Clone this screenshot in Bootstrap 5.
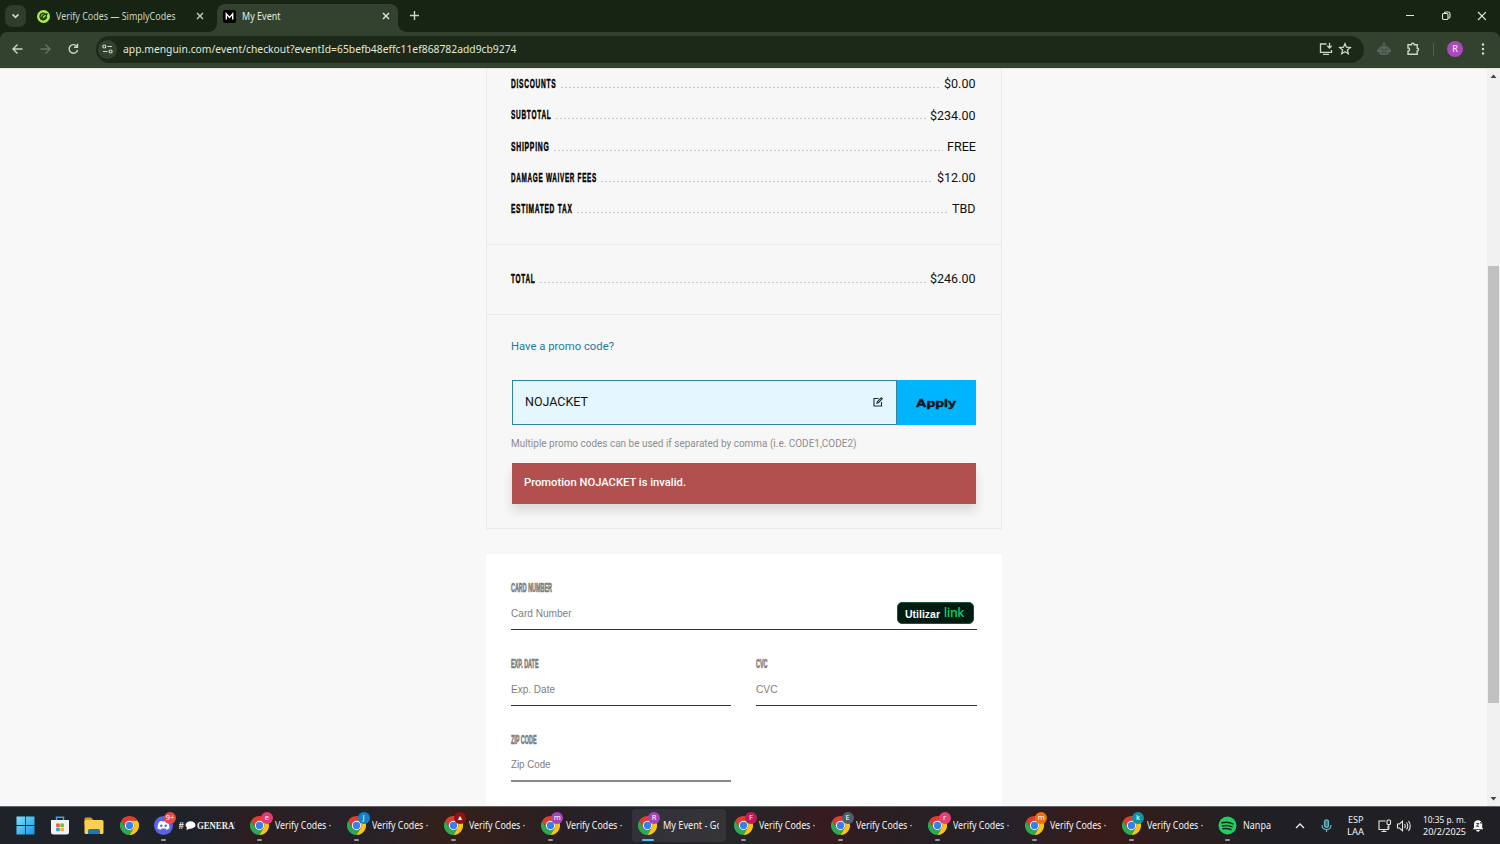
<!DOCTYPE html>
<html lang="en">
<head>
<meta charset="utf-8">
<title>My Event</title>
<link href="https://cdn.jsdelivr.net/npm/bootstrap@5.3.0/dist/css/bootstrap.min.css" rel="stylesheet">
<style>
body{width:1500px;height:844px;overflow:hidden;font-family:"Noto Sans","Open Sans",sans-serif;background:#f7f7f7;color:#111}
svg{display:block;flex:none}
.fit{display:inline-block;white-space:nowrap;transform-origin:0 50%;flex:none}
.ic{fill:none;stroke:#c9d8c4;stroke-width:1.4}
/* browser frame */
.tabstrip{height:32px;background:#172313;color:#c9d6c4;font-size:10.3px}
.tab-search{width:21px;height:22px;border-radius:7px;background:#2f3d2b;margin:5px 0 0 5px}
.tab-idle{width:191px;padding-left:11px;height:32px}
.tab-live{position:relative;width:181px;height:28px;margin-top:4px;padding:0 8px 4px 6px;background:#33412f;border-radius:8px 8px 0 0;color:#e3ebdf}
.tab-live::before,.tab-live::after{content:"";position:absolute;bottom:0;width:8px;height:8px}
.tab-live::before{left:-8px;background:radial-gradient(circle at 0 0,transparent 7.5px,#33412f 8px)}
.tab-live::after{right:-8px;background:radial-gradient(circle at 100% 0,transparent 7.5px,#33412f 8px)}
.tabstrip .fit{padding-top:1px}
.toolbar-wrap{background:#172313}
.toolbar{height:36px;background:#33412f;border-radius:7px 7px 0 0;padding:0 0 2px 12px}
.omni{width:1268px;height:27px;border-radius:14px;background:#1c2919;margin-left:14px;padding-left:2px;color:#e0e8dc;font-size:11.3px}
.omni-chip{width:19px;height:19px;border-radius:50%;background:#33412f;margin-right:6px}
.avatar{width:16px;height:16px;border-radius:50%;background:#ac47bd;color:#fff;font-size:9px}
/* page */
.viewport{height:738px;overflow:hidden;background:#f8f8f8;border-top:1px solid #e6e8e0}
.page-col{width:516px;margin-left:486px;font-family:Roboto,sans-serif}
.summary{width:515.5px;height:460px;border:1px solid #ebebeb;border-top:0;background:#f7f7f7}
.sect{padding:0 25px 0 24px;border-bottom:1px solid #ebebeb}
.line-row{height:31.25px;font-size:13.5px;position:relative;top:-.4px}
.amount{padding-bottom:1.6px}
.cond{font-family:"Liberation Sans",sans-serif;font-weight:700;color:#000;font-size:13.6px;letter-spacing:1.5px;-webkit-text-stroke:.5px}
.dots{flex:1;margin:7px 4px 0 4px;background:repeating-linear-gradient(90deg,#c9c9c9 0 2px,transparent 2px 4px);height:1px}
.promo-link{color:#1c7c9d;font-size:11.8px}
.code-box{width:385px;height:45px;border:1px solid #3184a0;background:#e4f7fe;padding:0 13px 1px 12px;font-size:13.6px}
.apply{width:79px;height:45px;background:#00b5fe;color:#07151c;border-radius:0;font:bold 11.3px "Liberation Sans",sans-serif;-webkit-text-stroke:.5px}
.hint{color:#8d8d8d;font-size:10.3px}
.invalid{height:40.5px;background:#b25050;color:#fff;padding:0 12px 1px;font-size:11.8px;font-weight:500;box-shadow:0 7px 10px rgba(0,0,0,.12)}
.pay{height:260px;margin-top:25px;background:#fff;padding:25px 25.5px 0 24.5px}
.field{height:51px;border-bottom:1.3px solid #333}
.field-name{font:bold 12.4px/19px "Liberation Sans",sans-serif;color:#808080;-webkit-text-stroke:.7px;height:18px}
.field-ph{font:11.3px/16px "Liberation Sans",sans-serif;color:#808080;height:16px}
.linkbtn{width:77px;height:22px;border-radius:5px;background:#001c10;border:1px solid #0d5b3a;color:#fff;font:bold 10.5px/1 "Liberation Sans",sans-serif;margin:-3px 3px 0 0;padding-left:7px}
.sbar{width:13px;background:#f1f1f1;height:738px}
.thumb{width:10.5px;height:437px;background:#c1c1c1;margin-top:188px}
/* taskbar */
.taskbar{height:38px;border-top:1px solid #63656a;color:#f2f2f2;font-size:10.8px;background:linear-gradient(90deg,#20222a 0,#20222a 13%,#2c1e20 17%,#25222a 24%,#35201a 30%,#2a1f22 37%,#24222a 42%,#262527 50%,#361b1f 55%,#281f22 60%,#25222a 67%,#391b19 73%,#281f20 80%,#202024 84%,#202024)}
.pin{width:34.6px}
.task{position:relative;width:94px;height:33px;margin-right:2.82px;border-radius:4px;padding-left:6px}
.task.live{background:rgba(255,255,255,.07)}
.task::after{content:"";position:absolute;left:13px;bottom:1px;width:5px;height:2px;border-radius:1px;background:#97979a}
.task.live::after{left:10px;width:12px;background:#5bbdec}
.task-title{width:56px;overflow:hidden;margin-left:6px;white-space:nowrap}
.pip{position:absolute;left:16.5px;top:3px;width:12px;height:12px;border-radius:50%;font-size:7.5px;color:#fff;line-height:1}
.tray{font-size:9.6px;line-height:12.5px;padding-top:1px}
</style>
</head>
<body class="d-flex flex-column">
<svg width="0" height="0" class="position-absolute">
<symbol id="chrome" viewBox="0 0 48 48"><path fill="#e33b2e" d="M3.2 12A24 24 0 0 1 44.8 12H24A12 12 0 0 0 13.6 30z"/><path fill="#2da94f" d="M3.2 12 13.6 30A12 12 0 0 0 34.4 30L24 48A24 24 0 0 1 3.2 12z"/><path fill="#fdc50f" d="M44.8 12A24 24 0 0 1 24 48L34.4 30A12 12 0 0 0 24 12z"/><circle cx="24" cy="24" r="12" fill="#fff"/><circle cx="24" cy="24" r="9.3" fill="#3b7ded"/></symbol>
</svg>

<header>
<div class="tabstrip d-flex">
  <div class="tab-search d-flex align-items-center justify-content-center"><svg width="9" height="6" class="ic"><path d="m1.5 1.3 3 3 3-3" stroke-width="1.7"/></svg></div>
  <div class="tab-idle d-flex align-items-center">
    <svg width="13" height="13" viewBox="0 0 13 13"><circle cx="6.5" cy="6.5" r="6.5" fill="#a9f04d"/><path d="M8.300 3.600A3.400 3.400 0 1 0 9.700 7M4.600 7.800 6 5.600q1.500-1.500 4-1.800-.5 2.800-2.500 4.200-1.500.7-2.900-.2z" fill="#1b3410" fill-opacity=".35" stroke="#1b3410" stroke-width="1.200"/></svg>
    <span class="fit" data-w="119.500" style="margin-left:6px">Verify Codes — SimplyCodes</span>
    <svg width="8" height="8" class="ic" style="margin-left:20.500px"><path d="m1 1 6 6M7 1 1 7" stroke-width="1.300"/></svg>
  </div>
  <div class="tab-live d-flex align-items-center">
    <svg width="13" height="13"><rect width="13" height="13" rx="2.500" fill="#000"/><path d="M3.300 9.500V3.800l3.200 3.600 3.200-3.600v5.700" fill="none" stroke="#fff" stroke-width="1.400"/></svg>
    <span class="fit" data-w="38.500" style="margin-left:6px">My Event</span>
    <svg width="8" height="8" class="ic ms-auto" style="stroke:#e3ebdf"><path d="m1 1 6 6M7 1 1 7"/></svg>
  </div>
  <svg width="9" height="9" class="ic" style="margin:11px 0 0 11.500px"><path d="M4.500 0v9M0 4.500h9"/></svg>
  <svg width="80" height="12" class="ic ms-auto" style="margin:10px 14px 0 0;stroke:#e0e8dc;stroke-width:1.100"><path d="M0 5.500h8M72 2l8 8M80 2l-8 8"/><rect x="36.500" y="3.500" width="5.500" height="6" rx="1.200"/><path d="M38.500 3.200Q38.500 2 40 2h2q2 0 2 2v2.500q0 1.700-1.500 1.700"/></svg>
</div>
<div class="toolbar-wrap"><div class="toolbar d-flex align-items-center">
  <svg width="70" height="12" class="ic"><path d="M10.500 6H1.300M5.500 1.500 1 6 5.500 10.500"/><path d="M28.500 6h9.200M33.500 1.500 38 6 33.500 10.500" stroke="#667462"/><path d="M65 3.500A4.300 4.300 0 1 0 65.600 7M65.500.8v3.400h-3.500"/></svg>
  <div class="omni d-flex align-items-center">
    <div class="omni-chip d-flex align-items-center justify-content-center"><svg width="11" height="10" class="ic" style="stroke-width:1.200"><circle cx="2.300" cy="2.500" r="1.500"/><path d="M5.500 2.500H10M1 7.500h4.500"/><circle cx="8.600" cy="7.500" r="1.500"/></svg></div>
    <span class="fit" data-w="393.500">app.menguin.com/event/checkout?eventId=65befb48effc11ef868782add9cb9274</span>
    <svg width="42" height="14" class="ic ms-auto" style="margin-right:9px;stroke-width:1.300"><path d="M8 2H2v8.300h11V8M4.500 12.300h6M11 .8v5M8.800 3.800 11 6l2.200-2.200" transform="translate(-.5)" style="transform:translateX(5.500px)"/><path d="m33 1.700 1.500 3.500 3.800.3-2.900 2.500.9 3.700-3.300-2-3.300 2 .9-3.700-2.900-2.500 3.800-.3z" transform="translate(-1)"/></svg>
  </div>
  <svg width="14" height="14" style="margin-left:13px" fill="#56625a"><circle cx="7" cy="2" r="1.500"/><rect x="2" y="4" width="10" height="9" rx="3"/><rect y="6.500" width="14" height="4" rx="1.500"/><path d="M4.500 6.700h1.700v1.500H4.500zM8 6.700h1.700v1.500H8zM5 10h4.500v1H5z" fill="#3d4a39"/></svg>
  <svg width="14" height="14" class="ic" style="margin-left:15px"><path d="M2 2.800h3.200a1.500 1.500 0 0 1 3 0h3v3.400a1.400 1.400 0 0 1 0 2.800v3.300H2V9.200a1.600 1.600 0 0 0 0-3.200z"/></svg>
  <div style="width:1px;height:13px;background:#52634d;margin-left:13px"></div>
  <div class="avatar d-flex align-items-center justify-content-center" style="margin-left:13px">R</div>
  <svg width="4" height="12" fill="#d5dfd0" style="margin-left:18px"><circle cx="2" cy="1.500" r="1.200"/><circle cx="2" cy="6" r="1.200"/><circle cx="2" cy="10.500" r="1.200"/></svg>
</div></div>
</header>

<main class="viewport d-flex justify-content-between">
<div class="page-col">
  <section class="summary">
    <div class="sect" style="height:176px">
      <div class="line-row d-flex align-items-center"><span class="fit cond" data-w="45.500">DISCOUNTS</span><i class="dots"></i><span class="fit amount" data-w="31.500">$0.00</span></div>
      <div class="line-row d-flex align-items-center"><span class="fit cond" data-w="40.500">SUBTOTAL</span><i class="dots"></i><span class="fit amount" data-w="45.500">$234.00</span></div>
      <div class="line-row d-flex align-items-center"><span class="fit cond" data-w="38.500">SHIPPING</span><i class="dots"></i><span class="fit amount" data-w="29">FREE</span></div>
      <div class="line-row d-flex align-items-center"><span class="fit cond" data-w="86">DAMAGE WAIVER FEES</span><i class="dots"></i><span class="fit amount" data-w="38.500">$12.00</span></div>
      <div class="line-row d-flex align-items-center"><span class="fit cond" data-w="61.500">ESTIMATED TAX</span><i class="dots"></i><span class="fit amount" data-w="23.500">TBD</span></div>
    </div>
    <div class="sect d-flex align-items-center" style="height:69.500px"><div class="line-row d-flex align-items-center w-100"><span class="fit cond" data-w="24.500">TOTAL</span><i class="dots"></i><span class="fit amount" data-w="45.500">$246.00</span></div></div>
    <div style="padding:22.500px 24.500px 0 24.500px">
      <div class="promo-link d-flex align-items-center" style="height:20px"><span class="fit" data-w="103" style="margin-left:-.5px">Have a promo code?</span></div>
      <div class="d-flex" style="margin-top:23px">
        <div class="code-box d-flex align-items-center justify-content-between"><span class="fit amount" data-w="63">NOJACKET</span>
          <svg width="10" height="10" fill="none" stroke="#1c2c33" stroke-width="1.100"><path d="M5.500 1.500H1v7.500h7.500V5M4 6.200l.3-1.500L8.300.8l1 1L5.400 5.800z"/></svg></div>
        <button class="btn apply p-0 border-0 d-flex align-items-center justify-content-center"><span class="fit" data-w="40">Apply</span></button>
      </div>
      <div class="hint d-flex align-items-center" style="height:38px;padding-bottom:1px"><span class="fit" data-w="345.500" style="margin-left:-.5px">Multiple promo codes can be used if separated by comma (i.e. CODE1,CODE2)</span></div>
      <div class="invalid d-flex align-items-center"><span class="fit" data-w="162">Promotion NOJACKET is invalid.</span></div>
    </div>
  </section>
  <section class="pay">
    <div class="field"><div class="field-name"><span class="fit" data-w="41">CARD NUMBER</span></div>
      <div class="d-flex justify-content-between align-items-start" style="padding-top:8px"><div class="field-ph"><span class="fit" data-w="60.500">Card Number</span></div>
      <div class="linkbtn d-flex align-items-center"><span class="fit" data-w="35" style="margin-top:2px">Utilizar</span><span class="fit" data-w="20.500" style="margin-left:4px;padding-top:1px;color:#00d66f;font:500 12.500px/1 Inter,sans-serif">link</span></div></div></div>
    <div class="d-flex" style="gap:25px;margin-top:25px">
      <div class="field" style="width:220.500px"><div class="field-name"><span class="fit" data-w="27.500">EXP. DATE</span></div><div class="field-ph" style="margin-top:7.500px"><span class="fit" data-w="44">Exp. Date</span></div></div>
      <div class="field flex-fill"><div class="field-name"><span class="fit" data-w="11.500">CVC</span></div><div class="field-ph" style="margin-top:7.500px"><span class="fit" data-w="21.500">CVC</span></div></div>
    </div>
    <div class="field" style="width:220.500px;margin-top:25px;border-bottom:2px solid #888"><div class="field-name"><span class="fit" data-w="25.500">ZIP CODE</span></div><div class="field-ph" style="margin-top:7px"><span class="fit" data-w="39.500">Zip Code</span></div></div>
  </section>
</div>
<div class="sbar d-flex flex-column align-items-center">
  <svg width="7" height="4" fill="#444" style="margin-top:5px"><path d="M.5 4h6l-3-3.500z"/></svg>
  <div class="thumb"></div>
  <svg width="7" height="4" fill="#444" style="margin-top:94px"><path d="M.5 0h6l-3 3.500z"/></svg>
</div>
</main>

<footer class="taskbar d-flex align-items-center">
  <div class="d-flex align-items-center" style="padding-left:8px;width:147.500px;flex:none">
    <div class="pin d-flex justify-content-center"><svg width="19" height="19"><defs><linearGradient id="w" x2="1" y2="1"><stop stop-color="#7be3fb"/><stop offset="1" stop-color="#1496e8"/></linearGradient></defs><path fill="url(#w)" d="M.5.500h8.600v8.600H.5zM9.900.5h8.600v8.600H9.900zM.5 9.900h8.600v8.600H.5zM9.900 9.900h8.600v8.600H9.900z"/></svg></div>
    <div class="pin d-flex justify-content-center"><svg width="18" height="19"><path d="M5.500 5V1.200h7V5" fill="none" stroke="#38a9de" stroke-width="1.400"/><path d="M0 4h18v12q0 2.500-2.500 2.500h-13Q0 18.500 0 16z" fill="#f1f1f3"/><path fill="#e85b2f" d="M5.200 7.500h3.500V11H5.200z"/><path fill="#7bb830" d="M9.400 7.500h3.500V11H9.400z"/><path fill="#289fe0" d="M5.200 11.700h3.500v3.500H5.200z"/><path fill="#f8b51e" d="M9.400 11.700h3.500v3.500H9.400z"/></svg></div>
    <div class="pin d-flex justify-content-center"><svg width="20" height="18"><path d="M.5 2q0-1.500 1.500-1.500h5L9.500 3H17v5H.5z" fill="#e09b16"/><rect x=".5" y="3" width="19" height="14" rx="1.500" fill="#fbcf50"/><path d="M4 17v-3.500Q4 12 5.500 12h9q1.500 0 1.500 1.500V17z" fill="#1678bd"/></svg></div>
    <div class="pin d-flex justify-content-center"><svg width="19" height="19"><use href="#chrome"/></svg></div>
  </div>
  <div class="task d-flex align-items-center">
    <svg width="19" height="19" viewBox="0 0 19 19"><circle cx="9.500" cy="9.500" r="9.500" fill="#5765e8"/><path d="M5 6q2-1.300 3-1.200l.5.8h2l.5-.8q1 0 3 1.200 1.800 3 1.500 6.300-1.500 1.300-3.200 1.500l-.8-1.300h-4l-.8 1.300Q5 13.600 3.500 12.300 3.300 9 5 6z" fill="#fff"/><circle cx="7.300" cy="9.700" r="1.200" fill="#5765e8"/><circle cx="11.700" cy="9.700" r="1.200" fill="#5765e8"/></svg>
    <span class="pip d-flex align-items-center justify-content-center" style="background:#e8474b">9+</span>
    <div class="task-title d-flex align-items-center" style="font:bold 10.500px 'Liberation Serif',serif"><span>#</span><svg width="11" height="9" style="margin:0 1px"><ellipse cx="5.500" cy="4" rx="5" ry="3.700" fill="#fff"/><path d="m2 5-.5 4L6 7z" fill="#fff"/></svg><span class="fit" data-w="43">GENERAL</span></div>
  </div>
  <div id="tasks" class="d-flex"></div>
  <div class="task d-flex align-items-center"><svg width="19" height="19"><circle cx="9.500" cy="9.500" r="9" fill="#20d05e"/><path d="M4 6.800q6-1.700 11 1M4.500 9.900q5-1.300 9.500 1M5 12.700q4.300-.9 8 .9" fill="none" stroke="#14241a" stroke-width="1.500" stroke-linecap="round"/></svg><div class="task-title"><span class="fit" data-w="28">Nanpa</span></div></div>
  <svg width="10" height="6" fill="none" stroke="#eee" stroke-width="1.300" style="margin-left:-14px"><path d="m1 5 4-4 4 4"/></svg>
  <svg width="11" height="14" fill="none" stroke="#69b5c9" stroke-width="1.200" style="margin-left:15.500px"><rect x="3.500" y=".8" width="4" height="7.500" rx="2" fill="#417484"/><path d="M1 6q0 4.500 4.500 4.500T10 6M5.500 10.500V13"/></svg>
  <div class="tray d-flex flex-column align-items-center flex-shrink-0" style="margin-left:15.500px"><span class="fit" data-w="15.500">ESP</span><span class="fit" data-w="17">LAA</span></div>
  <svg width="34" height="14" fill="none" stroke="#e5e5e5" stroke-width="1.100" style="margin-left:14px"><path d="M7.500 2H1v8.500h9V7M3.500 12.500h5M6 10.500v2"/><rect x="9" y="1" width="3.500" height="4.500" rx="1"/><path d="M10.800 5.500v5M19.500 5h2l3-2.800v9.600l-3-2.800h-2zM26.500 5q1.500 2 0 4M28.500 3.500q2.500 3.500 0 7M30.500 2q3.500 5 0 10"/></svg>
  <div class="tray text-end ms-auto"><div><span class="fit" data-w="43">10:35 p. m.</span></div><div><span class="fit" data-w="43">20/2/2025</span></div></div>
  <svg width="12" height="13" style="margin:0 16px 0 6px"><path d="M.8 10.200 2 8.500V4.700Q2.300 1.500 6 1.300q4 .2 4.200 3.400v3.800l1.100 1.700zM4 11h4q-.5 1.700-2 1.700T4 11z" fill="#f4f4f4"/><path d="M4.300 4.500h2.500L4.500 7.300H7M8 1.500h2.500L8.200 4h2.600" fill="none" stroke="#24242a" stroke-width=".9"/></svg>
</footer>

<script>
const tasks=[['e','#e03b76'],['J','#0d83cb'],['▴','#8d1210'],['m','#a345b6'],['R','#a345b6'],['F','#bb1a5b'],['E','#4a616c'],['r','#e53f79'],['m','#ef7008'],['k','#0c93a2']];
document.getElementById('tasks').innerHTML=tasks.map(([t,c],i)=>`<div class="task d-flex align-items-center${i==4?' live':''}"><svg width="19" height="19"><use href="#chrome"/></svg><span class="pip d-flex align-items-center justify-content-center" style="background:${c}">${t}</span><div class="task-title"><span class="fit" data-w="${i==4?59:56}">${i==4?'My Event - Go':'Verify Codes ·'}</span></div></div>`).join('');
document.querySelectorAll('.fit').forEach(e=>{const n=e.getBoundingClientRect().width,w=+e.dataset.w;e.style.transform=`scaleX(${w/n})`;e.style.marginRight=(w-n)+'px'});
</script>
<script src="https://cdn.jsdelivr.net/npm/bootstrap@5.3.0/dist/js/bootstrap.bundle.min.js"></script>
</body>
</html>
